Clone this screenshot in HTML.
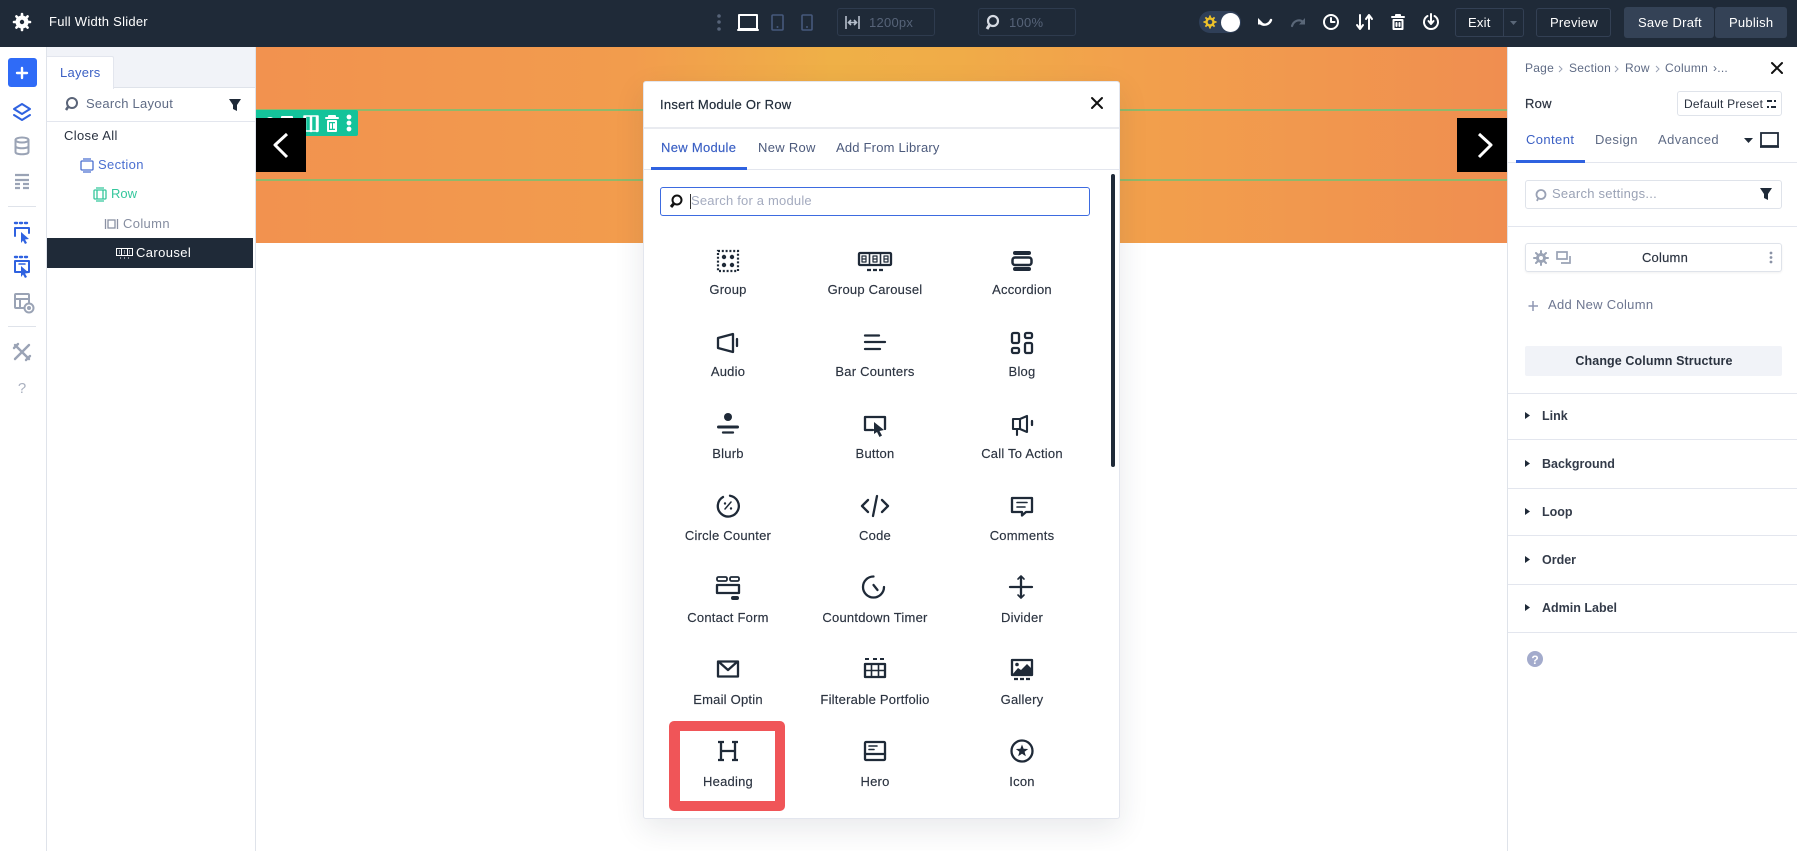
<!DOCTYPE html>
<html><head><meta charset="utf-8"><title>Full Width Slider</title>
<style>
html,body{margin:0;padding:0;background:#fff}
#p{position:relative;width:1797px;height:851px;overflow:hidden;background:#fff;font-family:"Liberation Sans",sans-serif;font-size:13px;color:#2a3240}
#p div{position:absolute;box-sizing:border-box}
.t{white-space:nowrap;line-height:16px;letter-spacing:.25px}
.c{text-align:center;width:160px;margin-left:-80px;color:#2b3340;letter-spacing:.22px;white-space:nowrap;line-height:16px;-webkit-text-stroke:.15px #2b3340}
svg{position:absolute;left:0;top:0;overflow:visible}
.k{fill:none;stroke:#1f2a38;stroke-width:2.3;stroke-linecap:round;stroke-linejoin:round}
.w{fill:none;stroke:#fff;stroke-width:2;stroke-linecap:round;stroke-linejoin:round}
.g{fill:none;stroke:#9aa3b5;stroke-width:2;stroke-linecap:round;stroke-linejoin:round}
.b{fill:none;stroke:#2f62e0;stroke-width:2;stroke-linecap:round;stroke-linejoin:round}
.f{fill:#1f2a38;stroke:none}
</style></head><body><div id="p">

<!-- header -->
<div style="left:0;top:0;width:1797px;height:47px;background:#1f2a38"></div>
<div class="t" style="left:49px;top:14px;color:#fff">Full Width Slider</div>
<div style="left:837px;top:8px;width:98px;height:28px;border:1px solid #2e3b4e;border-radius:3px"></div>
<div class="t" style="left:869px;top:15px;color:#566378">1200px</div>
<div style="left:978px;top:8px;width:98px;height:28px;border:1px solid #2e3b4e;border-radius:3px"></div>
<div class="t" style="left:1009px;top:15px;color:#566378">100%</div>
<div style="left:1199px;top:11px;width:42px;height:22px;background:#2f3f58;border-radius:11px"></div>
<div style="left:1221px;top:13px;width:19px;height:19px;background:#fff;border-radius:50%"></div>
<div style="left:1455px;top:8px;width:69px;height:29px;border:1px solid #334054;border-radius:3px"></div>
<div style="left:1503px;top:8px;width:1px;height:29px;background:#334054"></div>
<div class="t" style="left:1468px;top:15px;color:#fff">Exit</div>
<div style="left:1536px;top:8px;width:75px;height:29px;border:1px solid #334054;border-radius:3px"></div>
<div class="t" style="left:1550px;top:15px;color:#fff">Preview</div>
<div style="left:1624px;top:7px;width:90px;height:31px;background:#344256;border-radius:3px"></div>
<div class="t" style="left:1638px;top:15px;color:#fff">Save Draft</div>
<div style="left:1715px;top:7px;width:72px;height:31px;background:#344256;border-radius:3px"></div>
<div class="t" style="left:1729px;top:15px;color:#fff">Publish</div>

<!-- left sidebar -->
<div style="left:46px;top:47px;width:1px;height:804px;background:#dfe3ea"></div>
<div style="left:8px;top:58px;width:29px;height:29px;background:#2f6bf7;border-radius:3px"></div>
<div style="left:8px;top:206px;width:28px;height:1px;background:#dfe3ea"></div>
<div style="left:8px;top:326px;width:28px;height:1px;background:#dfe3ea"></div>

<!-- layers panel -->
<div style="left:47px;top:47px;width:208px;height:41px;background:#f1f3f8;border-bottom:1px solid #dfe3ea"></div>
<div style="left:47px;top:56px;width:67px;height:33px;background:#fff;border:1px solid #e3e6ee;border-left:0;border-bottom:0;border-radius:0 2px 0 0"></div>
<div class="t" style="left:60px;top:65px;color:#3b60c4">Layers</div>
<div class="t" style="left:86px;top:96px;color:#5f6b85">Search Layout</div>
<div style="left:47px;top:121px;width:208px;height:1px;background:#e3e6ee"></div>
<div class="t" style="left:64px;top:128px;color:#2a3240;letter-spacing:.35px">Close All</div>
<div class="t" style="left:98px;top:157px;color:#4a6fd0;letter-spacing:.35px">Section</div>
<div class="t" style="left:111px;top:186px;color:#35c79c;letter-spacing:0">Row</div>
<div class="t" style="left:123px;top:216px;color:#858da0;letter-spacing:.35px">Column</div>
<div style="left:47px;top:238px;width:206px;height:30px;background:#1f2a38"></div>
<div class="t" style="left:136px;top:245px;color:#fff;letter-spacing:.4px">Carousel</div>
<div style="left:255px;top:47px;width:1px;height:804px;background:#dfe3ea"></div>

<!-- hero -->
<div style="left:256px;top:47px;width:1251px;height:196px;background:linear-gradient(90deg,#f2924f 0%,#f29c4d 30%,#efb047 46%,#f0ac48 56%,#f2a04c 70%,#f08e50 100%)"></div>
<div style="left:256px;top:109px;width:1251px;height:2px;background:#8fb96b"></div>
<div style="left:256px;top:179px;width:1251px;height:2px;background:#8fb96b"></div>
<div style="left:256px;top:110px;width:102px;height:26px;background:#14c39a;border-radius:0 2px 2px 0"></div>
<svg width="400" height="200" style="left:0;top:0">
<g class="w"><circle cx="270" cy="122" r="4"/><rect x="282" y="117" width="10" height="9"/>
<path d="M305 117V131M311 117V131M317 117V131" stroke-width="2.5"/><rect x="304" y="116" width="14" height="15" stroke-width="1.5"/>
<path d="M326 118H338M329 118V116H335V118M328 121H336V131H328ZM331 124V128M334 124V128"/></g>
<g fill="#fff"><circle cx="349" cy="117" r="2.4"/><circle cx="349" cy="123" r="2.4"/><circle cx="349" cy="129" r="2.4"/></g>
</svg>
<div style="left:256px;top:118px;width:50px;height:54px;background:#000"></div>
<div style="left:1457px;top:118px;width:50px;height:54px;background:#000"></div>

<!-- right panel -->
<div style="left:1507px;top:47px;width:290px;height:804px;background:#fff;border-left:1px solid #dfe3ea"></div>
<div class="t" style="left:1525px;top:60px;font-size:12px;color:#5f6b85">Page</div>
<div class="t" style="left:1569px;top:60px;font-size:12px;color:#5f6b85;letter-spacing:.3px">Section</div>
<div class="t" style="left:1625px;top:60px;font-size:12px;color:#5f6b85">Row</div>
<div class="t" style="left:1665px;top:60px;font-size:12px;color:#5f6b85;letter-spacing:.3px">Column</div>
<div class="t" style="left:1713px;top:60px;font-size:12px;color:#5f6b85">›...</div>
<div class="t" style="left:1525px;top:96px;color:#2a3240;-webkit-text-stroke:.2px #2a3240">Row</div>
<div style="left:1677px;top:91px;width:105px;height:25px;border:1px solid #dfe3ea;border-radius:3px"></div>
<div class="t" style="left:1684px;top:96px;font-size:12px;color:#2a3240;letter-spacing:.22px">Default Preset</div>
<div class="t" style="left:1526px;top:132px;color:#3b60c4;letter-spacing:.4px">Content</div>
<div class="t" style="left:1595px;top:132px;color:#5f6b85;letter-spacing:.4px">Design</div>
<div class="t" style="left:1658px;top:132px;color:#5f6b85;letter-spacing:.4px">Advanced</div>
<div style="left:1508px;top:162px;width:289px;height:1px;background:#e3e6ee"></div>
<div style="left:1516px;top:160px;width:69px;height:3px;background:#2f62e0"></div>
<div style="left:1525px;top:180px;width:257px;height:29px;border:1px solid #dfe3ea;border-radius:3px"></div>
<div class="t" style="left:1552px;top:186px;color:#9aa2b5">Search settings...</div>
<div style="left:1508px;top:226px;width:289px;height:1px;background:#e3e6ee"></div>
<div style="left:1525px;top:243px;width:257px;height:29px;border:1px solid #dfe3ea;border-radius:3px;box-shadow:0 1px 2px rgba(0,0,0,.06)"></div>
<div class="c" style="left:1665px;top:250px">Column</div>
<div class="t" style="left:1548px;top:297px;color:#6d7690;letter-spacing:.3px">Add New Column</div>
<div style="left:1525px;top:346px;width:257px;height:30px;background:#f1f3f8;border-radius:2px"></div>
<div class="c" style="left:1654px;top:353px;font-size:12.5px;font-weight:bold;letter-spacing:.1px;-webkit-text-stroke:0">Change Column Structure</div>
<div style="left:1508px;top:393px;width:289px;height:1px;background:#e3e6ee"></div>
<div style="left:1508px;top:439px;width:289px;height:1px;background:#e3e6ee"></div>
<div style="left:1508px;top:488px;width:289px;height:1px;background:#e3e6ee"></div>
<div style="left:1508px;top:535px;width:289px;height:1px;background:#e3e6ee"></div>
<div style="left:1508px;top:584px;width:289px;height:1px;background:#e3e6ee"></div>
<div style="left:1508px;top:632px;width:289px;height:1px;background:#e3e6ee"></div>
<div class="t" style="left:1542px;top:408px;font-size:12.5px;font-weight:bold;letter-spacing:0;color:#333b49">Link</div>
<div class="t" style="left:1542px;top:456px;font-size:12.5px;font-weight:bold;letter-spacing:0;color:#333b49">Background</div>
<div class="t" style="left:1542px;top:504px;font-size:12.5px;font-weight:bold;letter-spacing:0;color:#333b49">Loop</div>
<div class="t" style="left:1542px;top:552px;font-size:12.5px;font-weight:bold;letter-spacing:0;color:#333b49">Order</div>
<div class="t" style="left:1542px;top:600px;font-size:12.5px;font-weight:bold;letter-spacing:0;color:#333b49">Admin Label</div>

<!-- modal -->
<div style="left:643px;top:81px;width:477px;height:738px;background:#fff;border:1px solid #e3e6ee;border-radius:3px;box-shadow:0 10px 30px rgba(30,40,60,.1)"></div>
<div class="t" style="left:660px;top:97px;color:#1f2a38;-webkit-text-stroke:.2px #1f2a38">Insert Module Or Row</div>
<div style="left:644px;top:127px;width:475px;height:2px;background:#e9ebf0"></div>
<div class="t" style="left:661px;top:140px;color:#3b60c4;letter-spacing:.3px;-webkit-text-stroke:.15px #3b60c4">New Module</div>
<div class="t" style="left:758px;top:140px;color:#4c5a7c;letter-spacing:.3px">New Row</div>
<div class="t" style="left:836px;top:140px;color:#4c5a7c;letter-spacing:.2px">Add From Library</div>
<div style="left:644px;top:169px;width:475px;height:1px;background:#e3e6ee"></div>
<div style="left:651px;top:167px;width:96px;height:3px;background:#2f62e0"></div>
<div style="left:660px;top:187px;width:430px;height:29px;border:1px solid #3d6be0;border-radius:3px"></div>
<div style="left:690px;top:194px;width:1px;height:15px;background:#333"></div>
<div class="t" style="left:691px;top:193px;color:#a4abbf;letter-spacing:.2px">Search for a module</div>
<div style="left:1111px;top:174px;width:4px;height:293px;background:#1f2a38;border-radius:2px"></div>

<div class="c" style="left:728px;top:282px">Group</div>
<div class="c" style="left:875px;top:282px">Group Carousel</div>
<div class="c" style="left:1022px;top:282px">Accordion</div>
<div class="c" style="left:728px;top:364px">Audio</div>
<div class="c" style="left:875px;top:364px">Bar Counters</div>
<div class="c" style="left:1022px;top:364px">Blog</div>
<div class="c" style="left:728px;top:446px">Blurb</div>
<div class="c" style="left:875px;top:446px">Button</div>
<div class="c" style="left:1022px;top:446px">Call To Action</div>
<div class="c" style="left:728px;top:528px">Circle Counter</div>
<div class="c" style="left:875px;top:528px">Code</div>
<div class="c" style="left:1022px;top:528px">Comments</div>
<div class="c" style="left:728px;top:610px">Contact Form</div>
<div class="c" style="left:875px;top:610px">Countdown Timer</div>
<div class="c" style="left:1022px;top:610px">Divider</div>
<div class="c" style="left:728px;top:692px">Email Optin</div>
<div class="c" style="left:875px;top:692px">Filterable Portfolio</div>
<div class="c" style="left:1022px;top:692px">Gallery</div>
<div class="c" style="left:728px;top:774px">Heading</div>
<div class="c" style="left:875px;top:774px">Hero</div>
<div class="c" style="left:1022px;top:774px">Icon</div>
<div style="left:669px;top:721px;width:116px;height:90px;border:10px solid #f05558;border-left-width:11px;border-right-width:10px;border-radius:5px"></div>

<!-- icons overlay -->
<svg width="1797" height="851">
<!-- header icons -->
<g transform="translate(22,22)"><circle r="5" class="w" stroke-width="3" style="stroke-width:3"/><path d="M0-8V8M-8 0H8M-5.6-5.6L5.6 5.6M-5.6 5.6L5.6-5.6" class="w" style="stroke-width:2.6"/><circle r="2.2" fill="#1f2a38"/></g>
<g fill="#566378"><circle cx="719" cy="16" r="1.8"/><circle cx="719" cy="22" r="1.8"/><circle cx="719" cy="29" r="1.8"/></g>
<rect x="739" y="15" width="18" height="14" class="w"/><path d="M738 30H758" class="w"/>
<rect x="772" y="15" width="11" height="15" rx="1" fill="none" stroke="#46597c" stroke-width="1.6"/><circle cx="777.5" cy="27" r="1" fill="#46597c"/>
<rect x="802" y="15" width="10" height="15" rx="1" fill="none" stroke="#46597c" stroke-width="1.6"/><circle cx="807" cy="27" r="1" fill="#46597c"/>
<path d="M846 16V29M859 16V29M849 22.5H856M851 20L848.5 22.5L851 25M854 20L856.5 22.5L854 25" fill="none" stroke="#b6bfcc" stroke-width="1.6"/>
<g transform="translate(992,22)" fill="none" stroke="#d5dae2" stroke-width="2.2"><circle cx="1" cy="-1" r="5"/><path d="M-2.5 3L-5 7" stroke-width="3"/></g>
<g transform="translate(1210,22)"><circle r="3.5" fill="none" stroke="#eec22a" stroke-width="2.5"/><path d="M0-6.5V6.5M-6.5 0H6.5M-4.6-4.6L4.6 4.6M-4.6 4.6L4.6-4.6" stroke="#eec22a" stroke-width="1.8"/><circle r="2.3" fill="#2f3f58"/></g>
<path d="M1271 20C1269 25 1264 26 1260 23" class="w" style="stroke-width:2.4"/><path d="M1258 18V24.5H1264.5Z" fill="#fff"/>
<path d="M1292 26C1294 20 1300 19 1303 22" fill="none" stroke="#5a6778" stroke-width="2.2" stroke-linecap="round"/><path d="M1305 18V24.500H1299Z" fill="#5a6778"/>
<g transform="translate(1331,22)"><circle r="7" class="w"/><path d="M0-4V0H3.5" class="w"/></g>
<path d="M1360 15V29M1357 25L1360 29L1363 25M1369 15V29M1366 19L1369 15L1372 19" class="w"/>
<path d="M1392 17H1404M1396 17V15H1400V17M1393.5 20H1402.5V29H1393.5ZM1396.5 23V26M1399.5 23V26" class="w"/>
<g transform="translate(1431,22)"><path d="M-3.5-6A7 7 0 1 0 3.5-6" class="w"/><path d="M0-8V2M-2.5-1L0 2L2.5-1" class="w"/></g>
<path d="M1510 21H1517L1513.5 25Z" fill="#5a6778"/>
<!-- sidebar icons -->
<path d="M22 68V78M17 73H27" class="w" style="stroke-width:2.4"/>
<g transform="translate(22,112)" class="b"><path d="M0-8L8-3L0 2L-8-3Z"/><path d="M-8 2L0 7L8 2" transform="translate(0,1)"/></g>
<g transform="translate(22,146)" class="g"><ellipse cy="-6" rx="6.5" ry="2.5"/><path d="M-6.5-6V6C-6.5 9 6.5 9 6.5 6V-6M-6.5 0C-6.5 3 6.5 3 6.5 0"/></g>
<g transform="translate(22,181)" class="g"><path d="M-7-6H7M-7-1H7M-7 3H-2M1 3H7M-7 7H-2M1 7H7" style="stroke-width:2.2;stroke-linecap:butt"/></g>
<g transform="translate(22,232)"><path d="M-7-9H-5M-2-9H0M3-9H5" class="b" style="stroke-width:2.4"/><path d="M-7 4V-4H7V1" class="b"/><path d="M-1 0L7 7L3 7.5L5 11L3 12L1 8.5L-1 11Z" fill="#2f62e0"/></g>
<g transform="translate(22,266)"><path d="M-7-9H-5M-2-9H0M3-9H5" class="b" style="stroke-width:2.4"/><rect x="-7" y="-5" width="14" height="11" class="b"/><path d="M-3-2H3" class="b" style="stroke-width:1.5"/><path d="M-1 0L7 7L3 7.5L5 11L3 12L1 8.5L-1 11Z" fill="#2f62e0"/></g>
<g transform="translate(22,301)" class="g"><rect x="-7" y="-7" width="14" height="14" rx="1"/><path d="M-7-2H7M-2-2V7"/><circle cx="7" cy="7" r="4.5" fill="#fff"/><circle cx="7" cy="7" r="1" /></g>
<g transform="translate(22,352)" class="g"><path d="M-7-7L7 7M7-7L-7 7M-8-4L-4-8M4 8L8 4" style="stroke-width:2.4"/></g>
<text x="22" y="393" text-anchor="middle" font-family="Liberation Sans" font-size="15" fill="#aab1c0">?</text>
<!-- layers icons -->
<g transform="translate(71,104)" fill="none" stroke="#5a6478" stroke-width="2"><circle cx="1" cy="-1" r="5"/><path d="M-3 3L-5 6" stroke-width="2.5"/></g>
<path d="M229 99H241L237 105V111L233 109V105Z" fill="#1f2a38"/>
<g fill="none" stroke="#4a6fd0" stroke-width="1.3"><rect x="81" y="161" width="12" height="9" rx="1"/><path d="M83 159H91M83 172H91"/></g>
<g fill="none" stroke="#35c79c" stroke-width="1.3"><rect x="94" y="190" width="12" height="9" rx="1"/><path d="M97 190V199M103 190V199M96 188H104M96 201H104"/></g>
<g fill="none" stroke="#8a91a3" stroke-width="1.3"><rect x="108" y="220" width="7" height="8"/><path d="M105.5 219V229M117.5 219V229"/></g>
<g fill="none" stroke="#fff" stroke-width="1"><rect x="116.5" y="248.5" width="16" height="7"/><path d="M121.5 249V255M127.5 249V255M119 251H120M119 253H120M124 251H125M124 253H125M129 251H130M129 253H130"/><path d="M120 258H121M124 258H125M128 258H129"/></g>
<!-- chevrons -->
<path d="M287 134L275 145L287 157" class="w" style="stroke-width:3;stroke-linecap:butt"/>
<path d="M1479 134L1491 145L1479 157" class="w" style="stroke-width:3;stroke-linecap:butt"/>
<!-- modal -->
<path d="M1092 98L1102 108M1102 98L1092 108" class="k" style="stroke:#111;stroke-width:2"/>
<g transform="translate(676,201)" fill="none" stroke="#111" stroke-width="2"><circle cx="1" cy="-1" r="4.5"/><path d="M-2.5 3L-5 6" stroke-width="3"/></g>

<g transform="translate(728,261)"><rect x="-10" y="-10" width="20" height="20" fill="none" stroke="#1f2a38" stroke-width="2.2" stroke-dasharray="2 1.8"/><circle cx="-4" cy="-4" r="2.2" class="f"/><circle cx="4" cy="-4" r="2.2" class="f"/><circle cx="-4" cy="4" r="2.2" class="f"/><circle cx="4" cy="4" r="2.2" class="f"/></g>
<g transform="translate(875,261)"><rect x="-16" y="-8" width="32" height="12" rx="1" class="k"/><path d="M-5.5-8V4M5.5-8V4" class="k" style="stroke-width:1.6;stroke-linecap:butt"/><path d="M-13-5H-9V1H-13ZM-2-5H2V1H-2ZM9-5H13V1H9ZM-13-2H-9M-2-2H2M9-2H13" class="k" style="stroke-width:1.2"/><path d="M-8 9H-4M-2 9H2M4 9H8" class="k" style="stroke-linecap:butt"/></g>
<g transform="translate(1022,261)"><path d="M-7-8H7M-7 8H7" class="k" style="stroke-width:4"/><rect x="-9.500" y="-3.500" width="19" height="7.500" rx="2.500" class="k" style="stroke-width:2.500"/></g>

<g transform="translate(728,343)"><path d="M-10-5L5-9V9L-10 5Z" class="k"/><path d="M9-4V3" class="k"/></g>
<g transform="translate(875,343)"><path d="M-10-7.5H4M-10-1H10M-10 6H5" class="k"/></g>
<g transform="translate(1022,343)"><rect x="-10" y="-10" width="7" height="10" rx="1.5" class="k"/><rect x="3" y="-10" width="7" height="5" rx="1.5" class="k"/><rect x="-10" y="5" width="7" height="5" rx="1.5" class="k"/><rect x="3" y="0" width="7" height="10" rx="1.5" class="k"/></g>

<g transform="translate(728,425)"><circle cy="-8" r="4" class="f"/><path d="M-9.5 2H9.5" class="k" style="stroke-width:3"/><path d="M-5 7.500H5" class="k"/></g>
<g transform="translate(875,425)"><path d="M-2 5H-10V-8H10V4" class="k"/><path d="M-1-3L9 5L4.5 6L7 10.5L4.5 12L2 7L-1 9Z" class="f"/></g>
<g transform="translate(1022,425)"><path d="M-9-6H-2L5-9V7L-2 4H-9ZM-5 4V10M-2-6V4" class="k" style="stroke-width:2.1"/><path d="M10-4V0" class="k"/></g>

<g transform="translate(728,506)"><path d="M-5-9A10.5 10.5 0 1 0 2-10.3" class="k"/><path d="M3-4L-3 3" class="k" style="stroke-width:1.5"/><circle cx="-3" cy="-2.500" r="1.200" class="f"/><circle cx="3" cy="2.500" r="1.200" class="f"/></g>
<g transform="translate(875,506)"><path d="M-7-6L-13 0L-7 6M7-6L13 0L7 6" class="k"/><path d="M2-10L-2 10" class="k"/></g>
<g transform="translate(1022,506)"><path d="M-10-8H10V6H4L0 9.5V6H-10Z" class="k"/><path d="M-5-3.5H5M-5 1H3" class="k" style="stroke-width:1.6"/></g>

<g transform="translate(728,587)"><rect x="-11" y="-10" width="10" height="4" rx="1.5" class="k" style="stroke-width:1.8"/><rect x="2" y="-10" width="9" height="4" rx="1.5" class="k" style="stroke-width:1.8"/><rect x="-11" y="-2" width="22" height="8" class="k"/><rect x="3" y="9" width="8" height="4" rx="2" class="f"/></g>
<g transform="translate(873.500,587)"><path d="M0-10.500A10.500 10.500 0 1 0 10.500 0" class="k"/><path d="M0-2L4 3" class="k"/></g>
<g transform="translate(1021,587)"><path d="M-11 0H11M0-10V10" class="k"/><path d="M-3-8L0-11L3-8M-3 8L0 11L3 8" class="k" style="stroke-width:1.6"/></g>

<g transform="translate(728,669)"><rect x="-10" y="-7.5" width="20" height="15" class="k"/><path d="M-9-7L0 1L9-7" class="k"/></g>
<g transform="translate(875,669)"><path d="M-10-10H-6M-2-10H2M5-10H9" class="k" style="stroke-width:2;stroke-linecap:butt"/><rect x="-10" y="-5" width="20" height="13" class="k"/><path d="M-3.500-5V8M3.500-5V8M-10 1.500H10" class="k" style="stroke-width:1.600"/></g>
<g transform="translate(1022,669)"><rect x="-10" y="-9" width="20" height="15" class="k"/><circle cx="-5" cy="-4.500" r="1.800" class="f"/><path d="M-10 6L-4-1L-1 1L5-5L10 0V6Z" class="f"/><path d="M-8 10H-4M-2 10H2M4 10H8" class="k" style="stroke-linecap:butt"/></g>

<g transform="translate(728,751)"><path d="M-7-9V9M7-9V9M-7 0H7M-10-9H-4M4-9H10M-10 9H-4M4 9H10" class="k" style="stroke-linecap:butt"/></g>
<g transform="translate(875,751)"><rect x="-10" y="-9" width="20" height="18" rx="1" class="k"/><path d="M-10 3H10" class="k"/><path d="M-6-5H2M-6-1.500H-1" class="k" style="stroke-width:1.600"/></g>
<g transform="translate(1022,751)"><circle r="10.500" class="k"/><path d="M0-6.500L1.600-2.200L6.200-2L2.600.8L3.800 5.300L0 2.700L-3.800 5.300L-2.600.8L-6.200-2L-1.600-2.200Z" class="f"/></g>
<!-- right panel icons -->
<path d="M1559 66L1562 69L1559 72M1615 66L1618 69L1615 72M1656 66L1659 69L1656 72" fill="none" stroke="#9aa2b5" stroke-width="1"/>
<path d="M1772 63L1782 73M1782 63L1772 73" class="k" style="stroke:#111;stroke-width:2"/>
<path d="M1767 101H1772M1774 101H1776M1767 107H1769M1771 107H1776" fill="none" stroke="#1f2a38" stroke-width="2"/>
<path d="M1744 138H1753L1748.500 143Z" fill="#1f2a38"/>
<rect x="1761" y="133" width="17" height="13" fill="none" stroke="#1f2a38" stroke-width="1.800"/><path d="M1760 147H1779" stroke="#1f2a38" stroke-width="1.800"/>
<g transform="translate(1541,195)" fill="none" stroke="#9aa2b5" stroke-width="1.800"><circle cy="-.5" r="4.500"/><path d="M-3 3.500L-4 6"/></g>
<path d="M1760 188H1772L1768 194V200L1764 198V194Z" fill="#1f2a38"/>
<g transform="translate(1541,258)"><circle r="4" class="g"/><path d="M0-7V7M-7 0H7M-5-5L5 5M-5 5L5-5" class="g"/><circle r="2" fill="#fff"/></g>
<path d="M1557 252H1567V259H1557ZM1570 256V263H1561" fill="none" stroke="#9aa2b5" stroke-width="1.700"/>
<g fill="#8a92a6"><circle cx="1771" cy="253" r="1.400"/><circle cx="1771" cy="257.500" r="1.400"/><circle cx="1771" cy="262" r="1.400"/></g>
<path d="M1533 301V311M1528.500 306H1538" stroke="#8f97b3" stroke-width="1.500" fill="none"/>
<path d="M1525 412L1530 415.500L1525 419ZM1525 460L1530 463.500L1525 467ZM1525 508L1530 511.500L1525 515ZM1525 556L1530 559.500L1525 563ZM1525 604L1530 607.500L1525 611Z" fill="#1f2a38"/>
<circle cx="1535" cy="659" r="8" fill="#a3abcc"/>
<text x="1535" y="664" text-anchor="middle" font-family="Liberation Sans" font-size="12" font-weight="bold" fill="#fff">?</text>
</svg>
</div></body></html>
